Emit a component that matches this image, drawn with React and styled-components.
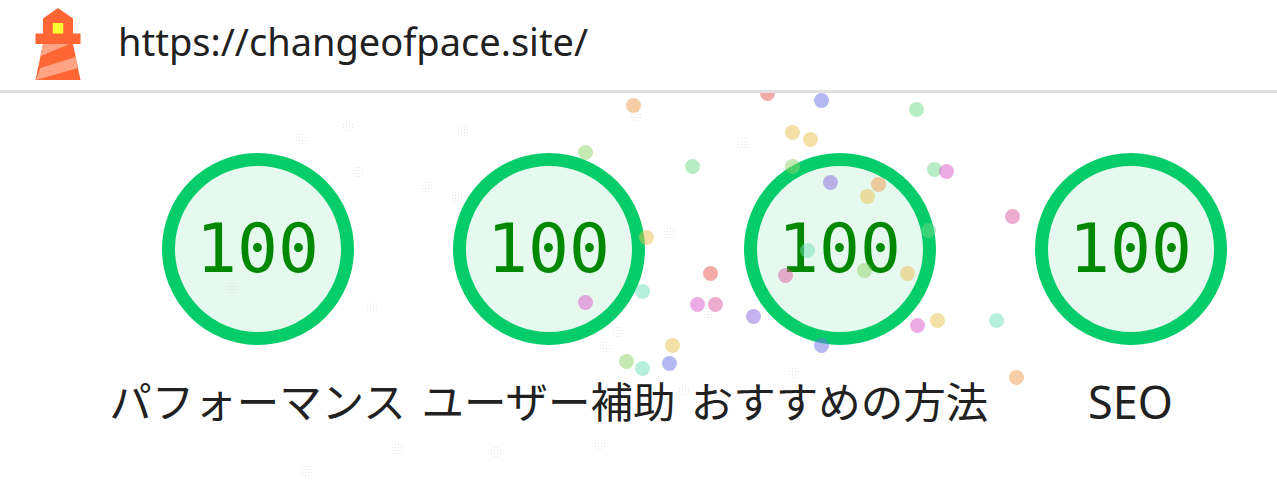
import React from 'react';
import styled, { createGlobalStyle } from 'styled-components';

const GlobalStyle = createGlobalStyle`
  html, body {
    margin: 0;
    background: #fff;
    overflow: hidden;
  }
`;

const Page = styled.div`
  width: 1277px;
  height: 486px;
  overflow: hidden;
  color: #212121;
  font-family: "Noto Sans", "Noto Sans CJK JP", sans-serif;
`;

const Header = styled.header`
  display: flex;
  align-items: center;
  gap: 24px;
  height: 90px;
  padding-left: 22px;
  border-bottom: 3px solid #e0e0e0;
`;

const Logo = styled.svg`
  margin-top: -2px;
`;

const Url = styled.div`
  font-size: 38px;
  line-height: 1;
  margin-top: -9px;
`;

const Main = styled.main`
  position: relative;
  height: 393px;
  overflow: hidden;
`;

const Scores = styled.div`
  display: flex;
  padding: 60px 0 0 112px;
`;

const Score = styled.div`
  width: 291px;
  display: flex;
  flex-direction: column;
  align-items: center;
`;

const Gauge = styled.div`
  width: 192px;
  height: 192px;
  box-sizing: border-box;
  border: 13px solid #06cd69;
  border-radius: 50%;
  background: #e6f9ef;
  display: flex;
  align-items: center;
  justify-content: center;
  color: #008800;
  font-family: "DejaVu Sans Mono", monospace;
  font-size: 68px;
  line-height: 1;
`;

const Label = styled.div`
  margin-top: 28px;
  font-size: ${(p) => (p.$latin ? '45px' : '42.5px')};
  line-height: 58px;
  white-space: nowrap;
`;

const palette = {
  yellow: '#e9c150',
  green: '#6fd98c',
  lime: '#8ed268',
  teal: '#6fe0bb',
  blue: '#6a72e4',
  purple: '#8a66e0',
  pink: '#dd5aa0',
  magenta: '#dc58ce',
  red: '#e5584d',
  orange: '#ee9c4c',
};

const Dot = styled.span.attrs((p) => ({
  style: { left: p.$x - 7.5, top: p.$y - 100.5 },
}))`
  position: absolute;
  width: 15px;
  height: 15px;
  border-radius: 50%;
  background: ${(p) => palette[p.$c]};
  opacity: 0.5;
`;

const Speck = styled.span.attrs((p) => ({
  style: { left: p.$x - 6, top: p.$y - 99 },
}))`
  position: absolute;
  width: 12px;
  height: 12px;
  border-radius: 50%;
  background: radial-gradient(circle, #8a8a8a 0.5px, transparent 0.9px) 0 0 / 3px 3px;
  opacity: 0.22;
`;

const dots = [
  [633, 105, 'orange'], [767, 93, 'red'], [821, 100, 'blue'], [916, 109, 'green'],
  [792, 132, 'yellow'], [810, 139, 'yellow'], [585, 152, 'lime'], [692, 166, 'green'],
  [792, 166, 'lime'], [830, 182, 'purple'], [878, 184, 'orange'], [867, 196, 'yellow'],
  [934, 169, 'green'], [946, 171, 'magenta'], [1012, 216, 'pink'], [646, 237, 'yellow'],
  [928, 230, 'green'], [807, 250, 'teal'], [710, 273, 'red'], [785, 275, 'pink'],
  [864, 270, 'lime'], [907, 273, 'yellow'], [642, 291, 'teal'], [585, 302, 'magenta'],
  [697, 304, 'magenta'], [715, 304, 'pink'], [753, 316, 'purple'], [917, 325, 'magenta'],
  [937, 320, 'yellow'], [996, 320, 'teal'], [821, 345, 'blue'], [672, 345, 'yellow'],
  [626, 361, 'lime'], [642, 368, 'teal'], [669, 363, 'blue'], [1016, 377, 'orange'],
];

const specks = [
  [348, 126], [301, 139], [463, 131], [358, 172], [427, 187], [457, 197], [496, 452],
  [636, 116], [743, 143], [669, 233], [232, 288], [372, 307], [618, 332], [605, 347],
  [710, 313], [794, 373], [397, 449], [307, 471], [600, 445], [684, 390],
];

const LighthouseLogo = () => (
  <Logo width="72" height="72" viewBox="0 0 48 48">
    <path d="m14 7 10-7 10 7v10h5v7h-5l5 24H9l5-24H9v-7h5V7Z" fill="#f63" />
    <path d="M31.56 24H14l-1.69 8.1L31.56 24ZM35.7 32.6 12.2 40 9.3 48 37.3 40 35.7 32.6Z" fill="#ffa385" />
    <path d="M20.5 10h7v7h-7z" fill="#ff3" />
  </Logo>
);

const scores = ['パフォーマンス', 'ユーザー補助', 'おすすめの方法', 'SEO'];

const App = () => {
  return (
    <Page>
      <GlobalStyle />
      <Header>
        <LighthouseLogo />
        <Url>https://changeofpace.site/</Url>
      </Header>
      <Main>
        <Scores>
          {scores.map((name) => (
            <Score key={name}>
              <Gauge>100</Gauge>
              <Label $latin={name === 'SEO'}>{name}</Label>
            </Score>
          ))}
        </Scores>
        {specks.map(([x, y]) => (
          <Speck key={`${x}-${y}`} $x={x} $y={y} />
        ))}
        {dots.map(([x, y, c]) => (
          <Dot key={`${x}-${y}`} $x={x} $y={y} $c={c} />
        ))}
      </Main>
    </Page>
  );
};

export default App;
